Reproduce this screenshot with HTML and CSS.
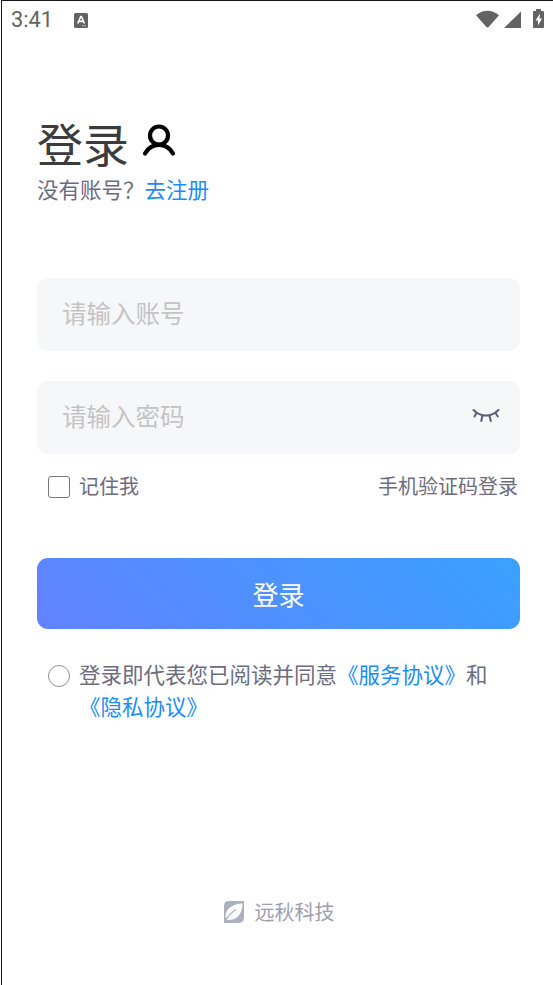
FILE: index.html
```html
<!DOCTYPE html>
<html lang="zh-CN">
<head>
<meta charset="utf-8">
<title>登录</title>
<link rel="stylesheet" href="styles.css">
</head>
<body>
<div class="screen">
  <header class="status">
    <span class="time">3:41</span>
    <svg class="ime" width="14" height="15" viewBox="0 0 14 15"><rect width="14" height="15" rx="1.5" fill="#636363"/><path d="M3.7 10.5 6.8 3.5h.6l3 7M4.9 8.4h4.4" fill="none" stroke="#fff" stroke-width="1.6"/><path d="M8 12.8h4" stroke="#ddd" stroke-dasharray="1 .6"/></svg>
    <svg class="icons" width="70" height="22" viewBox="0 0 70 22"><g fill="#636363"><path d="M1 6.2Q12.500-2.500 24 6.200L13.600 18Q12.500 19 11.400 18Z"/><path d="M46 2.500V19H29Z"/><path d="M61 0h5v2h2q1 0 1 1v15q0 1-1 1h-9q-1 0-1-1V3q0-1 1-1h2Z"/></g><path d="M65 4.500 60.500 11.500h2.500v5l4-7h-2.500Z" fill="#fff"/></svg>
  </header>
  <main class="content">
    <div class="heading">
      <h1>登录</h1>
      <svg class="person" width="34" height="34" viewBox="0 0 34 34" fill="none" stroke="#000" stroke-width="4.200" stroke-linecap="round"><circle cx="17" cy="11.500" r="9"/><path d="M3 29.500C6 24 11 20.800 17 20.800S28 24 31 29.500"/></svg>
    </div>
    <p class="signup">没有账号？<a>去注册</a></p>
    <div class="field">请输入账号</div>
    <div class="field password">请输入密码
      <svg width="28" height="16" viewBox="0 0 28 16" fill="none" stroke="#5d5c73" stroke-width="2" stroke-linecap="round"><path d="M1.500 2Q7 7.500 14 7.500T26.500 2M4.500 5 2.500 8.500M10.300 7.800 9.300 13M17.500 7.800 18.800 13M23.500 5 25.800 8.500"/></svg>
    </div>
    <div class="options">
      <span class="remember"><i class="checkbox"></i>记住我</span>
      <span>手机验证码登录</span>
    </div>
    <div class="submit">登录</div>
    <div class="agreement">
      <i class="radio"></i>
      <p>登录即代表您已阅读并同意<a>《服务协议》</a>和<br><a>《隐私协议》</a></p>
    </div>
  </main>
  <footer class="brand">
    <svg width="20" height="22" viewBox="0 0 20 22"><path d="M5 0h15v16q0 6-6 6H0V5q0-5 5-5Z" fill="#adb1bf"/><path d="M18.500 2.500C9 3 2 7.500 1.500 14.500q0 3 1.500 4.500c9 1 15.500-5.500 15.500-16.500Z" fill="#fff"/><path d="M0 21.500Q5 13 12 8.500" fill="none" stroke="#adb1bf" stroke-width="1.300"/></svg>
    <span>远秋科技</span>
  </footer>
</div>
</body>
</html>
```
FILE: styles.css
```css
* { box-sizing: border-box; margin: 0; padding: 0; }
body {
  height: 985px;
  overflow: hidden;
  background: #fff;
  color: #6d6c7e;
  font-family: "Noto Sans CJK SC", sans-serif;
  font-weight: 400;
}
svg { display: block; flex: none; }
a { color: #1a8cf7; }
.screen {
  display: flex;
  flex-direction: column;
  height: 985px;
  margin-left: 1px;
  border-top: 1px solid #16161f;
  border-left: 1px solid #16161f;
}
.status {
  display: flex;
  flex: none;
  height: 38px;
  padding: 0 8px 0 9px;
  align-items: center;
}
.time { font: 400 21.8px/40px Roboto, sans-serif; color: #636363; width: 63px; }
.icons { margin-left: auto; }
.content { padding: 78px 33px 0 35px; }
.heading { display: flex; height: 57px; }
h1 { font-size: 46px; line-height: 50px; font-weight: 400; color: #3c3c3e; }
.person { margin: 7px 0 0 13px; }
.signup { font-size: 21.5px; line-height: 29px; height: 31px; }
.field {
  display: flex;
  justify-content: space-between;
  height: 73px;
  margin-top: 73px;
  padding: 0 20px 0 25px;
  border-radius: 11px;
  background: #f6f7f9;
  color: #c4c4c5;
  font-size: 24.5px;
  line-height: 70px;
}
.password { margin-top: 30px; align-items: flex-start; }
.password svg { margin-top: 27px; }
.options {
  display: flex;
  justify-content: space-between;
  height: 30px;
  margin-top: 18px;
  padding: 0 2px 0 11px;
  font-size: 20px;
  line-height: 28px;
}
.remember { display: flex; align-items: center; height: 28px; }
.checkbox { width: 22px; height: 22px; margin: 1px 9px 0 0; border: 1.5px solid #77768a; border-radius: 3px; }
.submit {
  height: 71px;
  margin-top: 56px;
  border-radius: 11px;
  background: linear-gradient(45deg, #6282ff, #39a1ff);
  color: #fff;
  font-size: 26px;
  line-height: 72px;
  text-align: center;
}
.agreement { display: flex; margin-top: 29px; padding-left: 11px; font-size: 21.5px; line-height: 32px; white-space: nowrap; }
.radio { flex: none; width: 22px; height: 22px; margin: 7px 9px 0 0; border: 1px solid #919191; border-radius: 50%; }
.brand {
  display: flex;
  align-items: center;
  justify-content: center;
  gap: 11px;
  height: 30px;
  margin: auto 0 58px 3px;
  color: #a09eb1;
  font-size: 20px;
  line-height: 30px;
}
```
